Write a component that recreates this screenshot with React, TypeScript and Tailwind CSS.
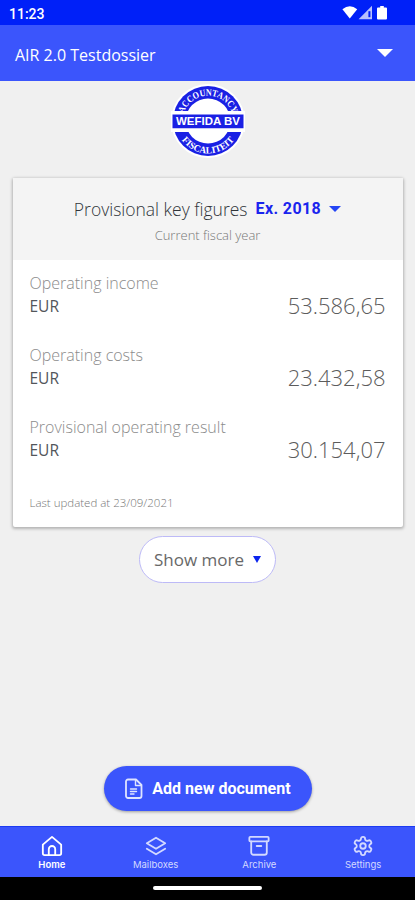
import type { ReactNode } from 'react';

interface Figure {
  label: string;
  amount: string;
}

const figures: Figure[] = [
  { label: 'Operating income', amount: '53.586,65' },
  { label: 'Operating costs', amount: '23.432,58' },
  { label: 'Provisional operating result', amount: '30.154,07' },
];

function StatusBar() {
  return (
    <div className="flex h-[25px] shrink-0 items-center justify-between bg-[#0020f8] pl-[9px] pr-[27px] text-white">
      <span className="pt-[2px] font-['Roboto',sans-serif] text-[14px] font-medium leading-none">11:23</span>
      <svg width="46" height="16" viewBox="0 0 46 16" fill="currentColor">
        <path d="M.4 4.2Q7.8-1.6 15.2 4.2L7.8 13.6Z" />
        <path d="M30 .8V14.2H16.6Z" opacity=".72" />
        <path d="M26.4 6.2h2v6h-2z" fill="#0020f8" />
        <path d="M36 2.6h2.2V1h3.6v1.6H44q1 0 1 1v10q0 1-1 1h-8q-1 0-1-1v-10q0-1 1-1Z" />
      </svg>
    </div>
  );
}

function Logo() {
  return (
    <svg className="h-20 w-20" viewBox="-40 -40 80 80" role="img" aria-label="Wefida BV">
      <defs>
        <path id="arc-top" d="M-25.4 0A25.4 25.4 0 0 1 25.4 0" />
        <path id="arc-bottom" d="M-32.4 0A32.4 32.4 0 0 0 32.4 0" />
      </defs>
      <circle r="37" fill="#fff" />
      <circle r="35" fill="#1a20e4" />
      <circle r="22.5" fill="#fff" />
      <path d="M-37-10h74v21h-74z" fill="#fff" />
      <path d="M-35.5-6.5h71v13.7h-71z" fill="#1a20e4" />
      <g fill="#fff" textAnchor="middle" className="font-['Liberation_Serif',serif] text-[9.5px] font-bold">
        <text textLength="64" lengthAdjust="spacingAndGlyphs">
          <textPath href="#arc-top" startOffset="50%">ACCOUNTANCY</textPath>
        </text>
        <text>
          <textPath href="#arc-bottom" startOffset="50%">FISCALITEIT</textPath>
        </text>
      </g>
      <text
        y="4.3"
        textAnchor="middle"
        textLength="64"
        lengthAdjust="spacingAndGlyphs"
        fill="#fff"
        className="font-['Liberation_Sans',sans-serif] text-[11.5px] font-bold"
      >
        WEFIDA BV
      </text>
    </svg>
  );
}

function NavItem({ label, active, children }: { label: string; active?: boolean; children: ReactNode }) {
  return (
    <button className={`flex flex-1 flex-col items-center pt-2 ${active ? 'text-white' : 'text-[#d3d9ff]'}`}>
      <svg
        width="22"
        height="22"
        viewBox="0 0 24 24"
        fill="none"
        stroke="currentColor"
        strokeWidth="2"
        strokeLinecap="round"
        strokeLinejoin="round"
      >
        {children}
      </svg>
      <span className={`mt-[3px] font-['Inter',sans-serif] text-[9.5px] leading-[10px] ${active ? 'font-semibold' : 'font-normal'}`}>
        {label}
      </span>
    </button>
  );
}

export default function App() {
  return (
    <div className="flex h-[900px] w-[415px] flex-col overflow-hidden bg-[#f0f0f0] font-['Open_Sans',sans-serif]">
      <StatusBar />

      {/* Dossier selector */}
      <header className="flex h-14 shrink-0 items-center justify-between bg-[#3b55fc] pl-[15px] pr-[22px] text-white">
        <h1 className="pt-[3px] text-[16px]">AIR 2.0 Testdossier</h1>
        <svg width="16" height="8" viewBox="0 0 16 8" fill="currentColor">
          <path d="M0 0h16L8 8Z" />
        </svg>
      </header>

      <main className="flex flex-1 flex-col items-center">
        <Logo />

        {/* Key figures card */}
        <section className="mt-[17px] h-[349px] w-[390px] rounded-[2px] bg-white shadow-[0_1px_3px_1px_rgba(0,0,0,0.25)]">
          <div className="flex h-[82px] flex-col items-center bg-[#f4f4f4] pt-[17px]">
            <div className="flex h-7 items-center">
              <h2 className="text-[17.5px] font-light text-[#30343a]">Provisional key figures</h2>
              <button className="ml-2 flex items-center gap-2 font-['Roboto',sans-serif] text-[16px] font-bold tracking-[0.4px] text-[#1a24ee]">
                Ex. 2018
                <svg width="12" height="6" viewBox="0 0 12 6" fill="#2445f4">
                  <path d="M0 0h12L6 6Z" />
                </svg>
              </button>
            </div>
            <p className="mt-[2px] text-[13px] font-light leading-5 text-[#777]">Current fiscal year</p>
          </div>

          <div className="px-[17px] pt-3">
            {figures.map((f) => (
              <div key={f.label} className="flex h-[72px] justify-between text-[16px] leading-[23px]">
                <div className="whitespace-nowrap">
                  <p className="font-light text-[#8b8b8b]">{f.label}</p>
                  <p className="text-[15.5px] text-[#53565b]">EUR</p>
                </div>
                <span className="pt-[22px] text-[22px] font-light text-[#5c5c5c]">{f.amount}</span>
              </div>
            ))}
            <p className="mt-[5px] text-[11.5px] font-light leading-5 text-[#777]">Last updated at 23/09/2021</p>
          </div>
        </section>

        <button className="mt-[9px] flex h-[47px] w-[137px] items-center justify-center gap-[9px] rounded-full border border-[#bdbaf7] bg-white text-[17px] text-[#686868]">
          Show more
          <svg width="8" height="7" viewBox="0 0 8 7" fill="#0a24ee">
            <path d="M0 0h8L4 7Z" />
          </svg>
        </button>

        <button className="mb-[15px] mt-auto flex h-[45px] w-[208px] items-center justify-center gap-2 rounded-full bg-[#3b55fc] font-['Roboto',sans-serif] text-[16px] font-bold text-white shadow-[0_1px_3px_rgba(0,0,0,0.35)]">
          <svg
            width="20"
            height="22"
            viewBox="0 0 20 22"
            fill="none"
            stroke="#dfe4ff"
            strokeWidth="1.8"
            strokeLinecap="round"
            strokeLinejoin="round"
          >
            <path d="M4 1.5h8l5.5 5.5v11a2 2 0 0 1-2 2H4a2 2 0 0 1-2-2V3.500a2 2 0 0 1 2-2Z" />
            <path d="M11.500 2v5.500H17M6.500 11h6M6.500 13.500h6M6.500 16h3.500" strokeWidth="1.400" />
          </svg>
          Add new document
        </button>
      </main>

      <nav className="flex h-[51px] shrink-0 border-t border-[#1c3bf2] bg-[#3b55fc]">
        <NavItem label="Home" active>
          <path d="M2 10.500 12 2l10 8.500V20a2 2 0 0 1-2 2H4a2 2 0 0 1-2-2Z" />
          <path d="M8.500 22v-6.500a3.500 3.500 0 0 1 7 0V22" />
        </NavItem>
        <NavItem label="Mailboxes">
          <path d="M12 3 22 9l-10 6L2 9Z" />
          <path d="m2 15 10 6 10-6" />
        </NavItem>
        <NavItem label="Archive">
          <rect x="1.500" y="2" width="21" height="5" rx="1" />
          <path d="M3.500 7v12a2.500 2.500 0 0 0 2.500 2.500h12a2.500 2.500 0 0 0 2.500-2.500V7M9.500 12h5" />
        </NavItem>
        <NavItem label="Settings">
          <path d="M12.220 2h-.440a2 2 0 0 0-2 2v.180a2 2 0 0 1-1 1.730l-.430.250a2 2 0 0 1-2 0l-.150-.080a2 2 0 0 0-2.730.730l-.220.380a2 2 0 0 0 .730 2.730l.150.100a2 2 0 0 1 1 1.720v.510a2 2 0 0 1-1 1.740l-.150.090a2 2 0 0 0-.730 2.730l.220.380a2 2 0 0 0 2.730.730l.150-.080a2 2 0 0 1 2 0l.430.250a2 2 0 0 1 1 1.730V20a2 2 0 0 0 2 2h.440a2 2 0 0 0 2-2v-.180a2 2 0 0 1 1-1.730l.430-.250a2 2 0 0 1 2 0l.150.080a2 2 0 0 0 2.730-.730l.220-.390a2 2 0 0 0-.730-2.730l-.150-.080a2 2 0 0 1-1-1.740v-.500a2 2 0 0 1 1-1.740l.150-.090a2 2 0 0 0 .730-2.730l-.220-.380a2 2 0 0 0-2.730-.730l-.150.080a2 2 0 0 1-2 0l-.430-.250a2 2 0 0 1-1-1.730V4a2 2 0 0 0-2-2Z" />
          <circle cx="12" cy="12" r="3" />
        </NavItem>
      </nav>

      {/* System gesture bar */}
      <div className="flex h-[23px] shrink-0 justify-center bg-black pt-[9px]">
        <div className="h-1 w-[109px] rounded-sm bg-white" />
      </div>
    </div>
  );
}
